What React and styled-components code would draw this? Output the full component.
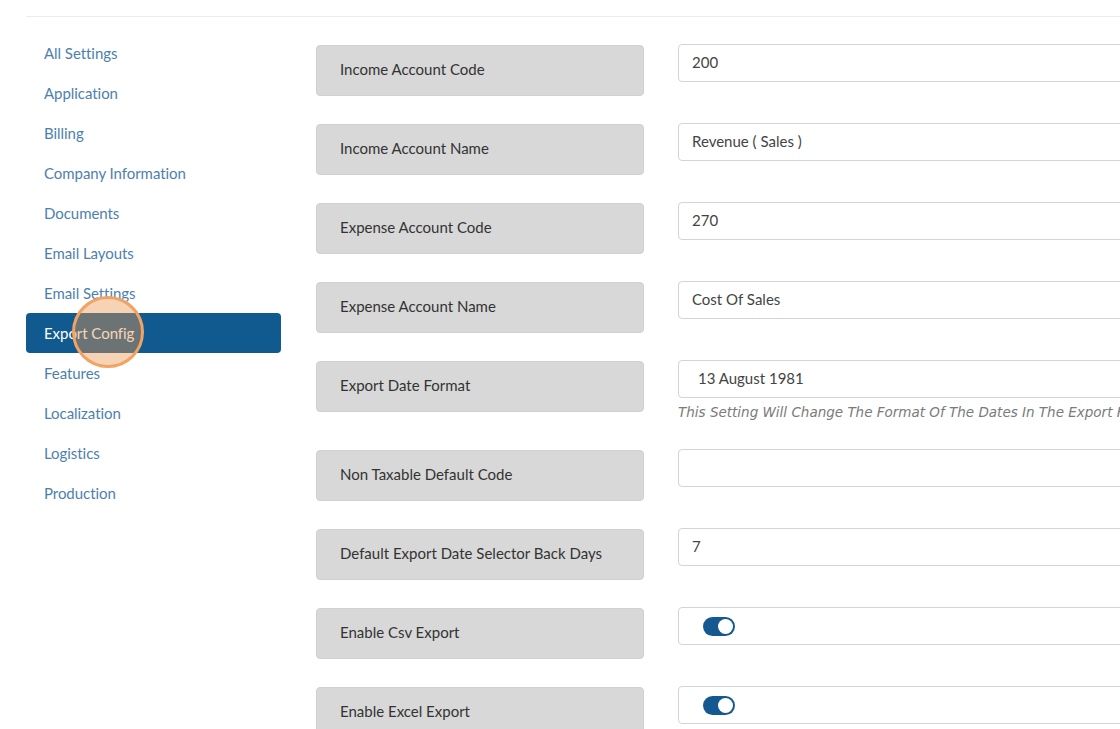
import React from "react";
import styled, { createGlobalStyle } from "styled-components";

const Global = createGlobalStyle`
  html, body { margin: 0; padding: 0; background: #fff; overflow: hidden; }
  body { font-family: Lato, "Open Sans", sans-serif; width: 1120px; height: 729px; }
`;

const Page = styled.div`
  width: 1120px;
  height: 729px;
  overflow: hidden;
`;

const TopRule = styled.div`
  height: 16px;
  margin-left: 26px;
  border-bottom: 1px solid #ececec;
`;

const Body = styled.div`
  display: flex;
  padding-left: 26px;
  gap: 35px;
`;

const Sidebar = styled.nav`
  width: 255px;
  flex: none;
  padding-top: 16px;
  display: flex;
  flex-direction: column;
`;

const NavItem = styled.a`
  position: relative;
  display: flex;
  align-items: center;
  height: 40px;
  padding-left: 18px;
  padding-bottom: 1px;
  box-sizing: border-box;
  border-radius: 4px;
  font-size: 15px;
  letter-spacing: -0.05px;
  color: ${(p) => (p.$active ? "#ffffff" : "#4d7fae")};
  background: ${(p) => (p.$active ? "#105a8f" : "transparent")};
  text-decoration: none;
`;

const ClickMark = styled.span`
  position: absolute;
  left: 46px;
  top: -17px;
  width: 66px;
  height: 66px;
  border-radius: 50%;
  border: 3px solid #f1a363;
  background: rgba(236, 150, 80, 0.42);
  pointer-events: none;
`;

const Main = styled.div`
  flex: 1;
  padding-top: 27px;
  display: flex;
  flex-direction: column;
  gap: 27px;
`;

const Row = styled.div`
  display: grid;
  grid-template-columns: 328px 480px;
  column-gap: 34px;
  align-items: start;
`;

const Label = styled.div`
  margin-top: 1px;
  height: 51px;
  box-sizing: border-box;
  background: #d8d8d8;
  border: 1px solid #d0d0d0;
  border-radius: 4px;
  display: flex;
  align-items: center;
  padding-left: 23px;
  padding-bottom: 4px;
  font-size: 15px;
  color: #333;
`;

const Field = styled.div`
  display: flex;
  flex-direction: column;
`;

const InputBox = styled.div`
  height: 38px;
  box-sizing: border-box;
  border: 1px solid #d4d4d4;
  border-radius: 4px;
  display: flex;
  align-items: center;
  padding-left: ${(p) => p.$pad || 13}px;
  padding-bottom: 2px;
  font-size: 15px;
  color: #444;
  background: #fff;
`;

const Help = styled.div`
  margin-top: 4px;
  line-height: 20px;
  font-family: "DejaVu Sans", Verdana, sans-serif;
  font-size: 13.5px;
  font-style: italic;
  color: #7a7a7a;
  white-space: nowrap;
`;

const Switch = styled.span`
  position: relative;
  width: 32px;
  height: 19px;
  margin-top: 2px;
  border-radius: 10px;
  background: #13598f;
  &::after {
    content: "";
    position: absolute;
    right: 2px;
    top: 2px;
    width: 15px;
    height: 15px;
    border-radius: 50%;
    background: #fff;
  }
`;

const navItems = [
  "All Settings",
  "Application",
  "Billing",
  "Company Information",
  "Documents",
  "Email Layouts",
  "Email Settings",
  "Export Config",
  "Features",
  "Localization",
  "Logistics",
  "Production",
];

const rows = [
  { label: "Income Account Code", value: "200" },
  { label: "Income Account Name", value: "Revenue ( Sales )" },
  { label: "Expense Account Code", value: "270" },
  { label: "Expense Account Name", value: "Cost Of Sales" },
  {
    label: "Export Date Format",
    value: "13 August 1981",
    pad: 19,
    help: "This Setting Will Change The Format Of The Dates In The Export Files",
  },
  { label: "Non Taxable Default Code", value: "" },
  { label: "Default Export Date Selector Back Days", value: "7" },
  { label: "Enable Csv Export", toggle: true },
  { label: "Enable Excel Export", toggle: true },
];

export default function App() {
  return (
    <Page>
      <Global />
      <TopRule />
      <Body>
        <Sidebar>
          {navItems.map((n) => (
            <NavItem key={n} $active={n === "Export Config"}>
              {n}
              {n === "Export Config" && <ClickMark />}
            </NavItem>
          ))}
        </Sidebar>
        <Main>
          {rows.map((r) => (
            <Row key={r.label}>
              <Label>{r.label}</Label>
              <Field>
                <InputBox $pad={r.toggle ? 24 : r.pad}>
                  {r.toggle ? <Switch /> : r.value}
                </InputBox>
                {r.help && <Help>{r.help}</Help>}
              </Field>
            </Row>
          ))}
        </Main>
      </Body>
    </Page>
  );
}
